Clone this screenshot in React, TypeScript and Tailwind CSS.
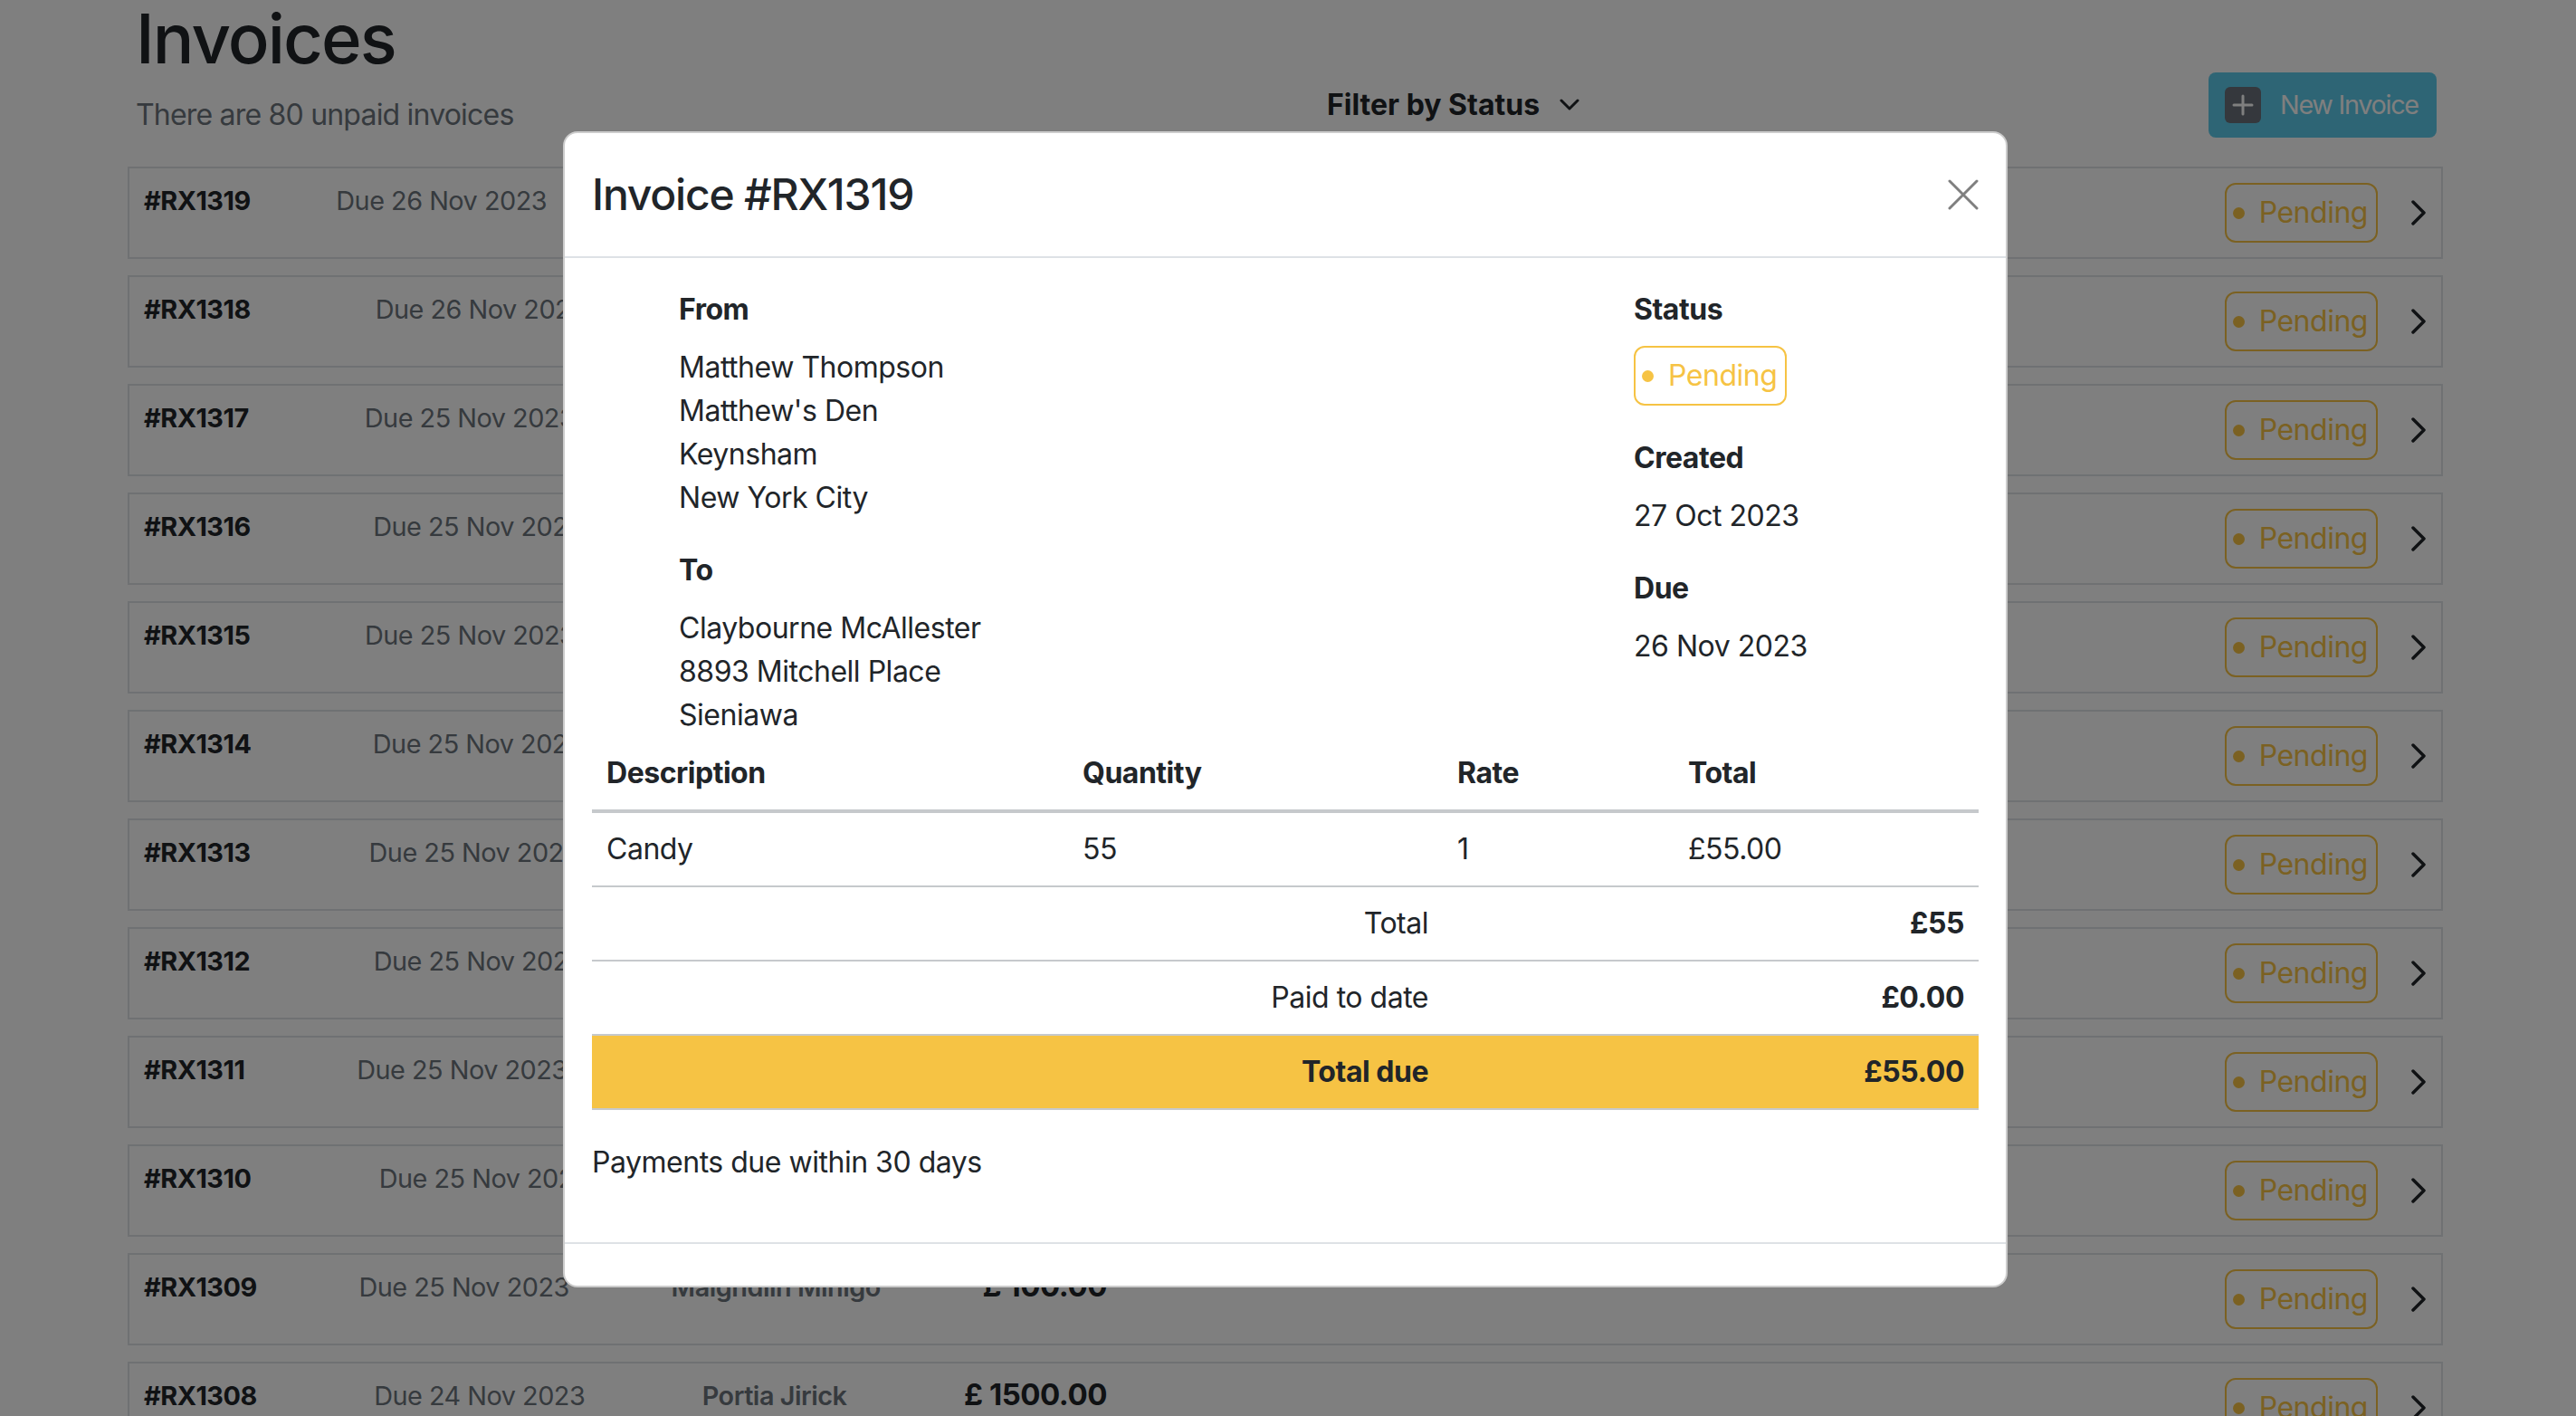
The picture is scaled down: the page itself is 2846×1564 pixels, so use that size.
import React from "react";

type Row = {
  id: string;
  due: string;
  name: string;
  amount: string;
};

const rows: Row[] = [
  { id: "RX1319", due: "26 Nov 2023", name: "Claybourne McAllester", amount: "£ 55.00" },
  { id: "RX1318", due: "26 Nov 2023", name: "Ardis Pagan", amount: "£ 100.00" },
  { id: "RX1317", due: "25 Nov 2023", name: "Gerladin Flook", amount: "£ 100.00" },
  { id: "RX1316", due: "25 Nov 2023", name: "Jarrett Hurst", amount: "£ 100.00" },
  { id: "RX1315", due: "25 Nov 2023", name: "Dorian Bowers", amount: "£ 100.00" },
  { id: "RX1314", due: "25 Nov 2023", name: "Mara Pepper", amount: "£ 100.00" },
  { id: "RX1313", due: "25 Nov 2023", name: "Bennet Crane", amount: "£ 100.00" },
  { id: "RX1312", due: "25 Nov 2023", name: "Tami Rourke", amount: "£ 100.00" },
  { id: "RX1311", due: "25 Nov 2023", name: "Fen Whitcombe", amount: "£ 100.00" },
  { id: "RX1310", due: "25 Nov 2023", name: "Wen Talbot", amount: "£ 100.00" },
  { id: "RX1309", due: "25 Nov 2023", name: "Maighdlin Minigo", amount: "£ 100.00" },
  { id: "RX1308", due: "24 Nov 2023", name: "Portia Jirick", amount: "£ 1500.00" },
];

function PendingBadge() {
  return (
    <span className="inline-flex h-[66px] items-center gap-[16px] rounded-[12px] border-2 border-[#f6c344] pl-[7px] pr-[9px] text-[32px] leading-[48px] text-[#f6c344]">
      <span className="h-[13px] w-[13px] rounded-full bg-[#f6c344]" />
      Pending
    </span>
  );
}

function ChevronRight() {
  return (
    <svg width="18" height="28" viewBox="0 0 18 28" fill="none">
      <path d="M3 2 L15 14 L3 26" stroke="#212529" strokeWidth="3.5" strokeLinecap="round" strokeLinejoin="round" />
    </svg>
  );
}

function InvoiceRow({ row }: { row: Row }) {
  return (
    <div className="flex justify-between border-2 border-[#dee2e6] p-4">
      <div className="-mt-[2px] flex w-[1064px] items-baseline justify-between self-start">
        <span className="text-[28.8px] leading-[43px] font-bold">#{row.id}</span>
        <span className="text-[28.8px] leading-[43px] text-[#6c757d]">Due {row.due}</span>
        <span className="text-[28.8px] leading-[43px] font-semibold text-[#6c757d]">{row.name}</span>
        <span className="text-[33px] leading-none font-bold">{row.amount}</span>
      </div>
      <div className="flex items-center gap-[36px]">
        <PendingBadge />
        <ChevronRight />
      </div>
    </div>
  );
}

function InvoiceModal() {
  return (
    <div className="absolute left-[622px] top-[145px] w-[1596px] rounded-[16px] border-2 border-black/20 bg-white text-[#212529]">
      <div className="flex h-[138px] items-center justify-between border-b-2 border-[#dee2e6] px-[30px]">
        <h3 className="text-[48px] leading-[72px] font-medium tracking-[-0.025em]">Invoice #RX1319</h3>
        <button className="flex h-[34px] w-[34px] items-center justify-center">
          <svg width="34" height="34" viewBox="0 0 34 34" fill="none">
            <path d="M2 2 L32 32 M32 2 L2 32" stroke="#000" strokeOpacity="0.5" strokeWidth="3" strokeLinecap="round" />
          </svg>
        </button>
      </div>

      <div className="px-[30px] pt-[33px] pb-[32px] text-[32px] leading-[48px]">
        <div className="flex">
          <div className="w-[1151px] pl-[96px]">
            <div className="mb-4 font-bold">From</div>
            <div className="mb-8">
              <div>Matthew Thompson</div>
              <div>Matthew's Den</div>
              <div>Keynsham</div>
              <div>New York City</div>
            </div>
            <div className="mb-4 font-bold">To</div>
            <div>
              <div>Claybourne McAllester</div>
              <div>8893 Mitchell Place</div>
              <div>Sieniawa</div>
            </div>
          </div>
          <div className="flex-1">
            <div className="mb-4 font-bold">Status</div>
            <div className="mt-px mb-[34px]">
              <PendingBadge />
            </div>
            <div className="mb-4 font-bold">Created</div>
            <div className="mb-8">27 Oct 2023</div>
            <div className="mb-4 font-bold">Due</div>
            <div>26 Nov 2023</div>
          </div>
        </div>

        <table className="w-full table-fixed border-collapse">
          <colgroup>
            <col className="w-[526px]" />
            <col className="w-[414px]" />
            <col className="w-[255px]" />
            <col />
          </colgroup>
          <thead>
            <tr className="border-b-4 border-[#c6c9cc]">
              <th className="p-4 text-left font-bold">Description</th>
              <th className="p-4 text-left font-bold">Quantity</th>
              <th className="p-4 text-left font-bold">Rate</th>
              <th className="p-4 text-left font-bold">Total</th>
            </tr>
          </thead>
          <tbody>
            <tr className="border-b-2 border-[#c6c9cc]">
              <td className="p-4">Candy</td>
              <td className="p-4">55</td>
              <td className="p-4">1</td>
              <td className="p-4">£55.00</td>
            </tr>
            <tr className="border-b-2 border-[#c6c9cc]">
              <td colSpan={2} className="p-4 text-right">Total</td>
              <td colSpan={2} className="p-4 text-right font-bold">£55</td>
            </tr>
            <tr className="border-b-2 border-[#c6c9cc]">
              <td colSpan={2} className="p-4 text-right">Paid to date</td>
              <td colSpan={2} className="p-4 text-right font-bold">£0.00</td>
            </tr>
            <tr className="border-b-2 border-[#c6c9cc] bg-[#f6c344]">
              <td colSpan={2} className="p-4 text-right font-bold">Total due</td>
              <td colSpan={2} className="p-4 text-right font-bold">£55.00</td>
            </tr>
          </tbody>
        </table>

        <p className="mt-[34px] mb-8">Payments due within 30 days</p>
      </div>

      <div className="h-[48px] border-t-2 border-[#dee2e6]" />
    </div>
  );
}

export default function App() {
  return (
    <div className="relative h-[1564px] w-[2846px] overflow-hidden bg-white font-['Inter','Liberation_Sans',sans-serif] tracking-[-0.03em] text-[#212529]">
      <div className="ml-[141px] w-[2558px]">
        <div className="flex items-end">
          <div className="w-[1325px] pl-[9px]">
            <h1 className="mt-[4px] text-[76px] leading-none font-medium tracking-[-0.025em]">Invoices</h1>
            <p className="mt-[23px] text-[32px] leading-[48px] tracking-[-0.025em] text-[#6c757d]">There are 80 unpaid invoices</p>
          </div>
          <div className="-mb-px flex h-[72px] flex-1 items-center">
            <button className="flex items-center gap-[22px] text-[32px] leading-[48px] font-bold tracking-normal">
              Filter by Status
              <svg width="22" height="14" viewBox="0 0 22 14" fill="none">
                <path d="M2 2 L11 11 L20 2" stroke="#212529" strokeWidth="3" strokeLinecap="round" strokeLinejoin="round" />
              </svg>
            </button>
            <button className="mr-[7px] ml-auto flex h-[72px] w-[252px] items-center gap-[21px] rounded-[8px] bg-[#5ccaea] pl-[18px] text-[28.8px] tracking-[-0.045em] text-white">
              <span className="flex h-[40px] w-[40px] items-center justify-center rounded-[6px] bg-[#6a707a]">
                <svg width="26" height="26" viewBox="0 0 26 26" fill="none">
                  <path d="M13 3 V23 M3 13 H23" stroke="#fff" strokeWidth="3" strokeLinecap="round" />
                </svg>
              </span>
              New Invoice
            </button>
          </div>
        </div>

        <div className="mt-[33px] flex flex-col gap-[18px]">
          {rows.map((row) => (
            <InvoiceRow key={row.id} row={row} />
          ))}
        </div>
      </div>

      <div className="absolute inset-0 bg-black/50" />
      <InvoiceModal />
    </div>
  );
}
